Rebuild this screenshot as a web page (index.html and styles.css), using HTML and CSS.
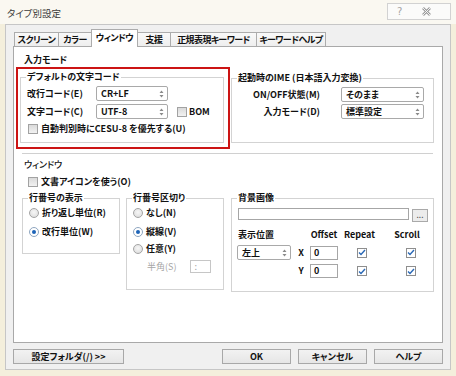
FILE: index.html
```html
<!DOCTYPE html>
<html lang="ja">
<head>
<meta charset="utf-8">
<title>タイプ別設定</title>
<link rel="stylesheet" href="styles.css">
</head>
<body>
<div class="window">
  <div class="titlebar">
    <span class="title">タイプ別設定</span>
    <div class="caption">
      <span class="cap-help">?</span>
      <svg class="cap-close" width="9" height="9" viewBox="0 0 9 9"><path d="M1 1L8 8M8 1L1 8" stroke="#9c9c9c" stroke-width="2.6" fill="none"/><path d="M1 1L8 8M8 1L1 8" stroke="#fbfbfb" stroke-width="0.9" fill="none"/></svg>
    </div>
  </div>

  <div class="client">
    <div class="tabs">
      <div class="tab t-screen">スクリーン</div>
      <div class="tab t-color">カラー</div>
      <div class="tab t-window active">ウィンドウ</div>
      <div class="tab t-support">支援</div>
      <div class="tab t-regex">正規表現キーワード</div>
      <div class="tab t-kwhelp">キーワードヘルプ</div>
    </div>

    <div class="panel">
      <div class="section-title">入力モード</div>

      <div class="top-row">
        <div class="highlight">
          <fieldset class="group g-charset">
            <legend>デフォルトの文字コード</legend>
            <div class="cs-row">
              <span class="cs-label">改行コード(E)</span>
              <div class="select cs-select">CR+LF<svg class="arrows" width="5" height="8" viewBox="0 0 5 8"><path d="M2.5 0.5L4.5 3H0.5Z M2.5 7.5L4.5 5H0.5Z" fill="#8a8a8a"/></svg></div>
            </div>
            <div class="cs-row row2">
              <span class="cs-label">文字コード(C)</span>
              <div class="select cs-select">UTF-8<svg class="arrows" width="5" height="8" viewBox="0 0 5 8"><path d="M2.5 0.5L4.5 3H0.5Z M2.5 7.5L4.5 5H0.5Z" fill="#8a8a8a"/></svg></div>
              <span class="check bom"><span class="cb"></span>BOM</span>
            </div>
            <div class="check auto"><span class="cb"></span>自動判別時にCESU-8 を優先する(U)</div>
          </fieldset>
        </div>

        <fieldset class="group g-ime">
          <legend>起動時のIME (日本語入力変換)</legend>
          <div class="ime-grid">
            <span class="ime-label">ON/OFF状態(M)</span>
            <div class="select">そのまま<svg class="arrows" width="5" height="8" viewBox="0 0 5 8"><path d="M2.5 0.5L4.5 3H0.5Z M2.5 7.5L4.5 5H0.5Z" fill="#8a8a8a"/></svg></div>
            <span class="ime-label">入力モード(D)</span>
            <div class="select">標準設定<svg class="arrows" width="5" height="8" viewBox="0 0 5 8"><path d="M2.5 0.5L4.5 3H0.5Z M2.5 7.5L4.5 5H0.5Z" fill="#8a8a8a"/></svg></div>
          </div>
        </fieldset>
      </div>

      <div class="separator"></div>

      <div class="section-title plain">ウィンドウ</div>
      <div class="check doc-icon"><span class="cb"></span>文書アイコンを使う(O)</div>

      <div class="bottom-row">
        <fieldset class="group g-lineno">
          <legend>行番号の表示</legend>
          <div class="radio first"><span class="rb"></span>折り返し単位(R)</div>
          <div class="radio second"><span class="rb on"></span>改行単位(W)</div>
        </fieldset>

        <fieldset class="group g-linesep">
          <legend>行番号区切り</legend>
          <div class="radio first"><span class="rb"></span>なし(N)</div>
          <div class="radio second"><span class="rb on"></span>縦線(V)</div>
          <div class="radio third"><span class="rb"></span>任意(Y)</div>
          <div class="hankaku"><span class="dim">半角(S)</span><div class="input small dim">:</div></div>
        </fieldset>

        <fieldset class="group g-bgimg">
          <legend>背景画像</legend>
          <div class="file-row"><div class="input file"></div><div class="mini-btn">...</div></div>
          <div class="pos-grid">
            <span class="h-pos">表示位置</span>
            <span></span>
            <span class="h-center">Offset</span>
            <span class="h-center h-repeat">Repeat</span>
            <span class="h-center h-scroll">Scroll</span>

            <div class="select pos-select">左上<svg class="arrows" width="5" height="8" viewBox="0 0 5 8"><path d="M2.5 0.5L4.5 3H0.5Z M2.5 7.5L4.5 5H0.5Z" fill="#8a8a8a"/></svg></div>
            <span class="axis">X</span>
            <div class="input num">0</div>
            <span class="cell-c"><span class="cb checked"><svg width="8" height="7" viewBox="0 0 8 7"><path d="M1 3.5L3 5.5L7 1" stroke="#2867b5" stroke-width="1.4" fill="none"/></svg></span></span>
            <span class="cell-c scroll-c"><span class="cb checked"><svg width="8" height="7" viewBox="0 0 8 7"><path d="M1 3.5L3 5.5L7 1" stroke="#2867b5" stroke-width="1.4" fill="none"/></svg></span></span>

            <span></span>
            <span class="axis">Y</span>
            <div class="input num">0</div>
            <span class="cell-c"><span class="cb checked"><svg width="8" height="7" viewBox="0 0 8 7"><path d="M1 3.5L3 5.5L7 1" stroke="#2867b5" stroke-width="1.4" fill="none"/></svg></span></span>
            <span class="cell-c scroll-c"><span class="cb checked"><svg width="8" height="7" viewBox="0 0 8 7"><path d="M1 3.5L3 5.5L7 1" stroke="#2867b5" stroke-width="1.4" fill="none"/></svg></span></span>
          </div>
        </fieldset>
      </div>
    </div>

    <div class="buttons">
      <div class="btn folder">設定フォルダ(/) &gt;&gt;</div>
      <div class="btn">OK</div>
      <div class="btn">キャンセル</div>
      <div class="btn">ヘルプ</div>
    </div>
  </div>
</div>
</body>
</html>
```

FILE: styles.css
```css
* { box-sizing: border-box; }

html, body { margin: 0; padding: 0; }

body {
  width: 456px;
  height: 376px;
  overflow: hidden;
  background: #f4efdc;
  font-family: "Noto Sans CJK JP", "Noto Sans", sans-serif;
  font-size: 9px;
  line-height: 12px;
  font-weight: 700;
  color: #111;
  font-feature-settings: "palt";
}

.window {
  width: 456px;
  height: 376px;
  display: flex;
  flex-direction: column;
}

/* title bar */
.titlebar {
  height: 24px;
  flex: none;
  display: flex;
  align-items: flex-start;
  background: #faf8f1;
  padding: 0 5px 0 7px;
}

.title {
  font-size: 9.5px;
  line-height: 26px;
  font-weight: 400;
  color: #3a3a3a;
}

.caption {
  margin-left: auto;
  margin-top: 3px;
  width: 64px;
  height: 17px;
  border: 1px solid #d2d2d2;
  background: #fbfbfa;
  display: flex;
  align-items: center;
  padding: 0 0 0 9px;
  gap: 20px;
}

.cap-help {
  font-family: "DejaVu Sans", sans-serif;
  font-size: 10px;
  font-weight: 400;
  color: #a5a5a5;
  line-height: 12px;
}

/* client area */
.client {
  flex: 1;
  margin: 0 5px 6px 5px;
  border: 1px solid #c6c6c6;
  background: #f0f0f0;
  padding: 4px 7px 5px 7px;
  display: flex;
  flex-direction: column;
}

.tabs {
  height: 17px;
  flex: none;
  display: flex;
  align-items: flex-end;
  padding-left: 1px;
}

.tab {
  height: 14px;
  padding: 0;
  border: 1px solid #acacac;
  border-bottom: none;
  margin-right: -1px;
  background: linear-gradient(#f9f9f9, #eeeeee);
  line-height: 13px;
  text-align: center;
  letter-spacing: -0.6px;
  white-space: nowrap;
  overflow: hidden;
}

.t-screen { width: 45px; }
.t-color { width: 34px; }
.t-window { width: 47px; }
.t-support { width: 34px; }
.t-regex { width: 87px; }
.t-kwhelp { width: 70px; }

.tab.active {
  height: 18px;
  margin-bottom: -1px;
  background: #fff;
  line-height: 15px;
  position: relative;
  z-index: 1;
}

.panel {
  flex: 1;
  background: #fff;
  border: 1px solid #a9a9a9;
  padding: 7px 8px 0 8px;
}

.section-title {
  margin-left: 2px;
  line-height: 12px;
}

.section-title.plain {
  margin-top: 5px;
  font-weight: 500;
}

.top-row {
  margin-top: 1px;
  display: flex;
  align-items: flex-start;
  gap: 1px;
}

.highlight {
  margin-left: -6px;
  width: 214px;
  border: 2px solid #cc1414;
  padding: 2px 4px 4px 2px;
}

/* group boxes */
.group {
  margin: 0;
  min-width: 0;
  border: 1px solid #d3d3d3;
  padding: 0 6px;
}

.group > legend {
  padding: 0 1px;
  margin-left: -1px;
  line-height: 12px;
}

.g-charset {
  width: 204px;
  padding-top: 3px;
  padding-bottom: 7px;
}

.cs-row {
  display: flex;
  align-items: center;
  height: 15px;
}

.cs-row.row2 { margin-top: 3px; }

.cs-label { width: 69px; }

.cs-select { width: 72px; }

.select {
  display: flex;
  align-items: center;
  height: 15px;
  border: 1px solid #a9a9a9;
  border-radius: 2px;
  background: #fff;
  padding: 0 3px 0 4px;
  white-space: nowrap;
}

.select .arrows { margin-left: auto; flex: none; }

.check {
  display: flex;
  align-items: center;
  white-space: nowrap;
}

.cb {
  width: 10px;
  height: 10px;
  flex: none;
  border: 1px solid #a2a2a2;
  background: linear-gradient(#dadada, #f2f2f2);
  margin-right: 3px;
  display: flex;
  align-items: center;
  justify-content: center;
}

.cb.checked {
  background: #fff;
  border-color: #8e8e8e;
  margin-right: 0;
}

.bom { margin-left: 9px; }
.bom .cb { margin-right: 2px; }

.auto {
  margin-top: 4px;
  margin-left: 1px;
  height: 12px;
}

.g-ime {
  width: 203px;
  margin-top: 5px;
  padding-top: 3px;
  padding-bottom: 23px;
}

.ime-grid {
  display: grid;
  grid-template-columns: 82px 83px;
  column-gap: 21px;
  row-gap: 2px;
  grid-auto-rows: 15px;
  align-items: center;
}

.ime-label { justify-self: end; }

.separator {
  margin-top: 4px;
  height: 1px;
  width: 411px;
  background: #d0d0d0;
}

.doc-icon {
  margin-top: 5px;
  margin-left: 6px;
  height: 12px;
}

.bottom-row {
  margin-top: 4px;
  display: flex;
  align-items: flex-start;
}

.g-lineno {
  width: 98px;
  padding-top: 3px;
  padding-bottom: 15px;
}

.g-linesep {
  width: 98px;
  margin-left: 6px;
  padding-top: 3px;
  padding-bottom: 16px;
}

.radio {
  display: flex;
  align-items: center;
  height: 12px;
  white-space: nowrap;
}

.radio.second { margin-top: 7px; }
.radio.third { margin-top: 5px; }

.rb {
  width: 10px;
  height: 10px;
  flex: none;
  border-radius: 50%;
  border: 1px solid #a4a4a4;
  background: radial-gradient(circle at 50% 40%, #f6f6f6, #dadada);
  margin-right: 3px;
  display: flex;
  align-items: center;
  justify-content: center;
}

.rb.on {
  background: #fff;
  border-color: #8fa6c0;
}

.rb.on::after {
  content: "";
  width: 4px;
  height: 4px;
  border-radius: 50%;
  background: #1d64b8;
}

.hankaku {
  margin-top: 5px;
  display: flex;
  align-items: center;
  height: 13px;
  padding-left: 14px;
}

.dim {
  color: #a6a6a6;
  font-weight: 400;
}

.input {
  height: 14px;
  border: 1px solid #a6a6a6;
  background: #fff;
  padding-left: 3px;
  line-height: 12px;
}

.input.small {
  width: 21px;
  height: 13px;
  margin-left: 14px;
  border-color: #c6c6c6;
}

.g-bgimg {
  width: 203px;
  margin-left: 7px;
  padding: 4px 1px 13px 6px;
}

.file-row {
  display: flex;
  align-items: flex-start;
  gap: 3px;
  padding-right: 4px;
}

.input.file {
  flex: 1;
  height: 12px;
}

.mini-btn {
  width: 16px;
  height: 13px;
  margin-top: 1px;
  border: 1px solid #a9a9a9;
  background: #ececec;
  font-size: 7px;
  line-height: 10px;
  text-align: center;
  color: #444;
}

.pos-grid {
  margin-top: 6px;
  display: grid;
  grid-template-columns: 53px 19px 28px 48px 1fr;
  grid-template-rows: 13px 15px 14px;
  row-gap: 4px;
  align-items: center;
}

.h-center { justify-self: center; }
.h-repeat { margin-right: 5px; }
.h-scroll { margin-right: 4px; }

.pos-select { width: 54px; margin-left: -1px; }

.axis { justify-self: center; margin-left: 1px; }

.input.num { width: 28px; }

.cell-c { justify-self: center; display: flex; }
.scroll-c { margin-left: 4px; }

/* buttons */
.buttons {
  margin-top: 6px;
  height: 15px;
  flex: none;
  display: flex;
  gap: 7px;
}

.btn {
  width: 69px;
  height: 15px;
  border: 1px solid #a8a8a8;
  background: linear-gradient(#f2f2f2, #e6e6e6);
  text-align: center;
  line-height: 13px;
  white-space: nowrap;
}

.btn.folder {
  width: 111px;
  margin-right: auto;
}
```
